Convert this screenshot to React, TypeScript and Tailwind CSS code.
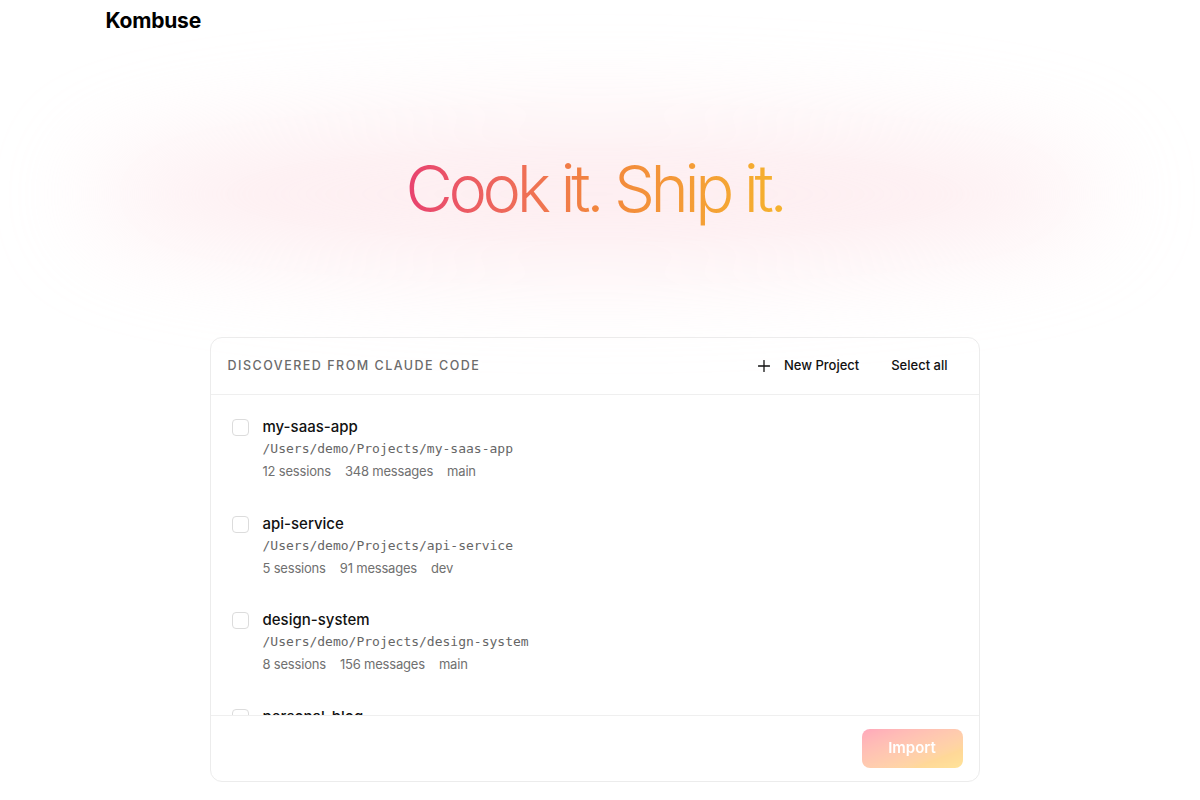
import React from "react";

const projects = [
  { name: "my-saas-app", path: "/Users/demo/Projects/my-saas-app", sessions: "12 sessions", messages: "348 messages", branch: "main" },
  { name: "api-service", path: "/Users/demo/Projects/api-service", sessions: "5 sessions", messages: "91 messages", branch: "dev" },
  { name: "design-system", path: "/Users/demo/Projects/design-system", sessions: "8 sessions", messages: "156 messages", branch: "main" },
  { name: "personal-blog", path: "/Users/demo/Projects/personal-blog", sessions: "3 sessions", messages: "42 messages", branch: "main" },
];

export default function App() {
  return (
    <div className="min-h-[800px] bg-white pr-[11px] text-[#111] font-['Inter','Noto_Sans',sans-serif] overflow-hidden relative">
      <div className="mx-auto max-w-5xl px-6">
        <header className="pt-[7px] h-[42px]">
          <div className="-ml-[1px] text-[21px] leading-7 font-bold tracking-[-0.01em] text-black">Kombuse</div>
        </header>

        <section className="relative h-[295px] flex items-center justify-center">
          <div className="pointer-events-none absolute left-1/2 top-[152px] -translate-x-1/2 -translate-y-1/2 w-[1020px] h-[140px] rounded-[50%] bg-[#fcd9df] opacity-50 blur-[50px]" />
          <h1 className="relative mt-[6px] text-[65px] leading-none font-light tracking-[-0.068em] bg-gradient-to-r from-[#e8416f] via-[#f2853d] to-[#f5b22d] bg-clip-text text-transparent pb-3 pt-1">
            Cook it. Ship it.
          </h1>
        </section>

        <div className="mx-auto w-[770px] rounded-xl border border-[#ececec] bg-white flex flex-col h-[445px] overflow-hidden">
          <div className="h-[57px] shrink-0 flex items-center justify-between pl-[17px] pr-[19px] border-b border-[#efefef]">
            <span className="text-[12.5px] font-medium tracking-[0.12em] text-[#6b6b6b] uppercase">
              Discovered from Claude Code
            </span>
            <div className="flex items-center">
              <button className="flex items-center gap-[14px] px-3 py-1.5 text-[13px] font-medium text-[#111]">
                <svg width="12" height="12" viewBox="0 0 12 12" fill="none" stroke="#111" strokeWidth="1.3" strokeLinecap="round">
                  <path d="M6 0.5v11M0.5 6h11" />
                </svg>
                New Project
              </button>
              <button className="ml-[8px] px-3 py-1.5 text-[13px] font-medium text-[#111]">Select all</button>
            </div>
          </div>

          <div className="flex-1 overflow-hidden pt-[5px]">
            {projects.map((p) => (
              <div key={p.name} className="flex items-start gap-[14px] pl-[21px] pr-5 py-[16px] h-[96.5px]">
                <span className="mt-[3px] w-[17px] h-[17px] shrink-0 rounded-[4px] border border-[#dcdcdc] bg-white" />
                <div className="flex flex-col">
                  <span className="text-[15px] leading-[22px] font-medium text-[#111]">{p.name}</span>
                  <span className="mt-[1px] text-[13px] leading-[20px] text-[#666] font-['DejaVu_Sans_Mono',monospace]">{p.path}</span>
                  <div className="mt-[2px] flex gap-[14px] text-[13px] leading-[20px] text-[#707070] tracking-[-0.015em]">
                    <span>{p.sessions}</span>
                    <span>{p.messages}</span>
                    <span>{p.branch}</span>
                  </div>
                </div>
              </div>
            ))}
          </div>

          <div className="h-[66px] shrink-0 border-t border-[#efefef] flex items-center justify-end pr-4">
            <button className="h-[39px] w-[101px] rounded-lg bg-gradient-to-br from-rose-500 to-amber-400 opacity-40 text-white text-[15px] font-semibold">
              Import
            </button>
          </div>
        </div>
      </div>
    </div>
  );
}
